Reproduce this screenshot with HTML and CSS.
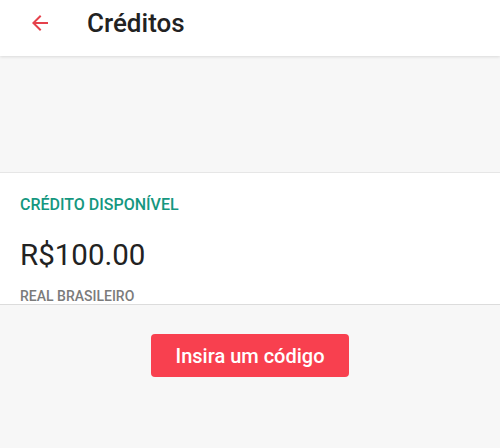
FILE: index.html
```html
<!DOCTYPE html>
<html lang="pt">
<head>
  <meta charset="UTF-8">
  <title>Créditos</title>
  <link rel="stylesheet" href="styles.css">
</head>
<body>
  <header class="topbar">
    <button class="back" aria-label="Voltar">
      <svg width="24" height="24" viewBox="0 0 24 24"><path d="M20 11H7.83l5.59-5.59L12 4l-8 8 8 8 1.41-1.41L7.83 13H20v-2z" fill="#e5414b"/></svg>
    </button>
    <h1>Créditos</h1>
  </header>

  <div class="spacer"></div>

  <section class="card">
    <p class="label">CRÉDITO DISPONÍVEL</p>
    <p class="amount">R$100.00</p>
    <p class="currency">REAL BRASILEIRO</p>
  </section>

  <div class="actions">
    <button class="code-button">Insira um código</button>
  </div>
</body>
</html>
```

FILE: styles.css
```css
body {
  margin: 0;
  font-family: Roboto, 'Noto Sans', sans-serif;
  background: #f7f7f7;
  color: #222;
}
.topbar {
  height: 56px;
  background: #fff;
  display: flex;
  align-items: center;
  box-shadow: 0 1px 3px rgba(0, 0, 0, 0.12);
  position: relative;
}
.back {
  width: 24px;
  height: 24px;
  margin-left: 28px;
  margin-top: -10px;
  padding: 0;
  border: none;
  background: none;
}
.topbar h1 {
  margin: 0 0 0 35px;
  margin-top: -10px;
  font-size: 26px;
  font-weight: 500;
  color: #222;
}
.spacer {
  height: 116px;
}
.card {
  background: #fff;
  border-top: 1px solid #e6e6e6;
  border-bottom: 1px solid #dcdcdc;
  padding: 21px 20px 0;
  height: 110px;
}
.card p {
  margin: 0;
}
.label {
  color: #15977f;
  font-size: 16px;
  font-weight: 500;
  line-height: 22px;
}
.amount {
  font-size: 29.5px;
  line-height: 36px;
  margin-top: 21px !important;
  color: #222;
}
.currency {
  font-size: 14px;
  font-weight: 500;
  color: #7b7b7b;
  margin-top: 14px !important;
  line-height: 18px;
}
.actions {
  display: flex;
  justify-content: center;
  padding-top: 29px;
}
.code-button {
  width: 198px;
  height: 43px;
  border: none;
  border-radius: 4px;
  background: #f8404f;
  color: #fff;
  font-family: Roboto, 'Noto Sans', sans-serif;
  font-size: 20px;
  font-weight: 500;
}
```
